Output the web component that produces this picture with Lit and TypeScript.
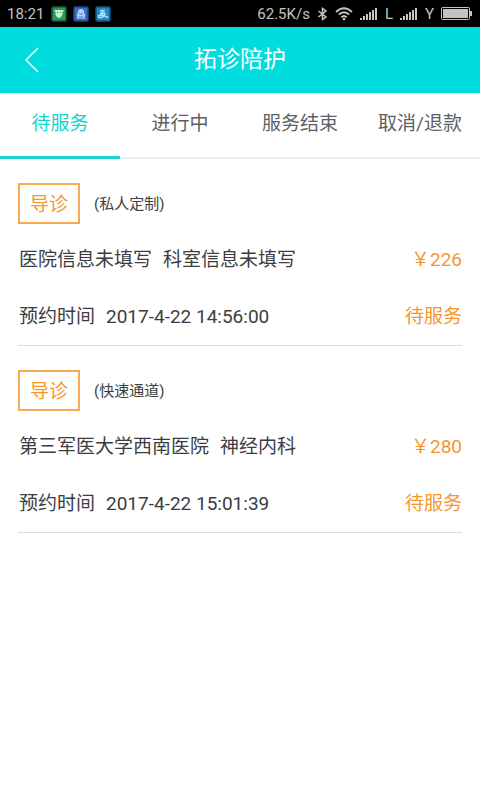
import { LitElement, html, css, svg } from "lit";
import { customElement, property, state } from "lit/decorators.js";
import { classMap } from "lit/directives/class-map.js";

interface Order {
  kind: string;
  plan: string;
  hospital: string;
  department: string;
  price: string;
  time: string;
  status: string;
}

const ORDERS: Order[] = [
  {
    kind: "导诊",
    plan: "(私人定制)",
    hospital: "医院信息未填写",
    department: "科室信息未填写",
    price: "¥226",
    time: "2017-4-22 14:56:00",
    status: "待服务",
  },
  {
    kind: "导诊",
    plan: "(快速通道)",
    hospital: "第三军医大学西南医院",
    department: "神经内科",
    price: "¥280",
    time: "2017-4-22 15:01:39",
    status: "待服务",
  },
];

// Prices are shown with the full-width yen sign.
const fullWidthYen = (price: string) => price.replace("\u00a5", "\uffe5");

const TABS = ["待服务", "进行中", "服务结束", "取消/退款"];

@customElement("status-bar")
export class StatusBar extends LitElement {
  static styles = css`
    :host {
      display: flex;
      align-items: center;
      justify-content: space-between;
      padding: 1px 7px 0;
      background: #000;
      color: #c4c4c4;
      font-size: 15px;
      line-height: 26px;
    }
    .group {
      display: flex;
      align-items: center;
      gap: 7px;
    }
    .apps {
      display: flex;
      gap: 6px;
    }
    svg {
      display: block;
    }
  `;

  private signal() {
    return html`<svg width="18" height="12" viewBox="0 0 18 12" fill="#c4c4c4" aria-hidden="true">
      <rect x="0" y="10" width="2" height="2" />
      <rect x="3" y="8" width="2" height="4" />
      <rect x="6" y="6" width="2" height="6" />
      <rect x="9" y="4" width="2" height="8" />
      <rect x="12" y="2" width="2" height="10" />
      <rect x="15" y="0" width="2" height="12" />
    </svg>`;
  }

  private app(fill: string, edge: string, glyph: unknown) {
    return html`<svg width="16" height="16" viewBox="0 0 16 16" aria-hidden="true">
      <rect x="1" y="1" width="14" height="14" rx="1.5" fill=${fill} stroke=${edge} stroke-width="1.5" />
      ${glyph}
    </svg>`;
  }

  render() {
    return html`
      <div class="group">
        <span>18:21</span>
        <div class="apps">
          ${this.app(
            "#2a9a5c",
            "#1a5a3a",
            svg`<path d="M3.500 4h9v1.500h-1v3q-.5 2.500-3.500 3.500q-3-1-3.500-3.500v-3h-1z" fill="#c3f2cf"/><path d="M6 6.500h1M9 6.500h1" stroke="#2a9a5c"/>`
          )}
          ${this.app(
            "#3a6fc8",
            "#234780",
            svg`<path d="M8 3q3 0 3 3.500l1.500 3l-1 .5l.5 2.500h-8l.5-2.500l-1-.5l1.500-3q0-3.500 3-3.500z" fill="#b5d2f8"/><path d="M6 7.500q2 1.500 4 0M6 11h4" stroke="#3a6fc8" fill="none"/>`
          )}
          ${this.app(
            "#2488c0",
            "#17557c",
            svg`<path d="M5 5h5M7.500 3.500v3.500M5 7.500h5q-1 4-4.500 4q-2.500 0-2-1.700q2.500-2.300 9.500 1.700" fill="none" stroke="#b5e4f6" stroke-width="1.500"/>`
          )}
        </div>
      </div>
      <div class="group">
        <span>62.5K/s</span>
        <svg width="11" height="14" viewBox="0 0 11 14" fill="none" stroke="#c4c4c4" stroke-width="1.500" aria-hidden="true">
          <path d="M1.500 4l7.500 6L5.500 12.500V1.500L9 4L1.500 10" />
        </svg>
        <svg width="18" height="14" viewBox="0 0 18 14" fill="none" stroke="#c4c4c4" stroke-width="1.800" aria-hidden="true">
          <path d="M1 5q8-7.500 16 0M3.700 7.700q5.300-5 10.600 0M6.300 10.300q2.700-2.500 5.400 0" />
          <circle cx="9" cy="12" r="1.300" fill="#c4c4c4" stroke="none" />
        </svg>
        ${this.signal()}
        <span>L</span>
        ${this.signal()}
        <span>Y</span>
        <svg width="32" height="14" viewBox="0 0 32 14" aria-hidden="true">
          <rect x="0.500" y="0.500" width="28" height="12" rx="1" fill="none" stroke="#c4c4c4" />
          <rect x="2" y="2" width="25" height="9" fill="#c4c4c4" />
          <rect x="29" y="4" width="2" height="5" fill="#c4c4c4" />
        </svg>
      </div>
    `;
  }
}

@customElement("order-card")
export class OrderCard extends LitElement {
  @property({ attribute: false }) order!: Order;

  static styles = css`
    :host {
      display: block;
      margin: 0 18px;
      padding: 24px 0 0;
      border-bottom: 1px solid #dcdcdc;
      font-size: 19px;
      color: #3c3d42;
    }
    .head {
      display: flex;
      align-items: center;
      gap: 14px;
      margin-bottom: 7px;
    }
    .kind {
      padding: 3px 10px 0;
      border: 2px solid #f9ab52;
      color: #f7962c;
      line-height: 34px;
    }
    .plan {
      font-size: 15px;
      line-height: 20px;
    }
    .row {
      display: flex;
      justify-content: space-between;
      padding: 0 0 0 1px;
      line-height: 57px;
      white-space: nowrap;
    }
    .text {
      display: flex;
      gap: 11px;
    }
    .accent {
      color: #f7962c;
    }
  `;

  render() {
    const o = this.order;
    return html`
      <div class="head">
        <span class="kind">${o.kind}</span>
        <span class="plan">${o.plan}</span>
      </div>
      <div class="row">
        <div class="text"><span>${o.hospital}</span><span>${o.department}</span></div>
        <span class="accent">${fullWidthYen(o.price)}</span>
      </div>
      <div class="row">
        <div class="text"><span>预约时间</span><time>${o.time}</time></div>
        <span class="accent">${o.status}</span>
      </div>
    `;
  }
}

@customElement("app-root")
export class AppRoot extends LitElement {
  @state() private active = 0;

  static styles = css`
    :host {
      display: block;
      min-height: 100vh;
      background: #fff;
      font-family: Roboto, "Noto Sans CJK SC", sans-serif;
    }
    .header {
      display: grid;
      grid-template-columns: 64px 1fr 64px;
      align-items: center;
      background: #00dddf;
      color: #fff;
    }
    .back {
      display: flex;
      justify-content: center;
      padding: 0;
      border: 0;
      background: none;
      color: inherit;
      cursor: pointer;
    }
    .title {
      margin: 0;
      font-size: 23px;
      font-weight: 400;
      line-height: 66px;
      text-align: center;
    }
    .tabs {
      display: grid;
      grid-template-columns: repeat(4, 1fr);
      box-shadow: inset 0 -2px #efefef;
    }
    .tab {
      padding: 0 0 1px;
      border: 0;
      border-bottom: 3px solid transparent;
      background: none;
      color: #5d6066;
      font: inherit;
      font-size: 19px;
      line-height: 62px;
      white-space: nowrap;
      cursor: pointer;
    }
    .tab.active {
      color: #14d3cc;
      border-bottom-color: #1bd3d3;
    }
  `;

  render() {
    return html`
      <status-bar></status-bar>
      <header class="header">
        <button class="back" aria-label="返回">
          <svg width="14" height="26" viewBox="0 0 14 26" fill="none" stroke="currentColor" stroke-width="1.500" aria-hidden="true">
            <path d="M13 1L1 13L13 25" />
          </svg>
        </button>
        <h1 class="title">拓诊陪护</h1>
      </header>
      <nav class="tabs" role="tablist">
        ${TABS.map(
          (label, i) => html`<button
            role="tab"
            aria-selected=${i === this.active ? "true" : "false"}
            class=${classMap({ tab: true, active: i === this.active })}
            @click=${() => (this.active = i)}
          >${label}</button>`
        )}
      </nav>
      <main>${ORDERS.map((o) => html`<order-card .order=${o}></order-card>`)}</main>
    `;
  }
}
